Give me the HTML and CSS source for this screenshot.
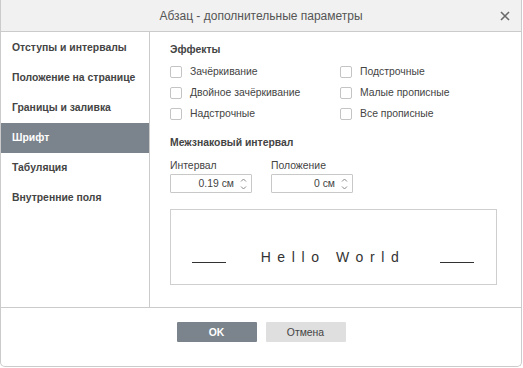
FILE: index.html
```html
<!DOCTYPE html>
<html lang="ru">
<head>
<meta charset="utf-8">
<title>Абзац - дополнительные параметры</title>
<link rel="stylesheet" href="styles.css">
</head>
<body>
<div class="dialog">
  <div class="header">
    <span></span>
    <span class="title">Абзац - дополнительные параметры</span>
    <span class="close"><svg width="10" height="10" viewBox="0 0 10 10"><path d="M1 1L9 9M9 1L1 9" stroke="#6a6a6a" stroke-width="1.6" fill="none"/></svg></span>
  </div>
  <div class="body">
    <ul class="side">
      <li>Отступы и интервалы</li>
      <li>Положение на странице</li>
      <li>Границы и заливка</li>
      <li class="active">Шрифт</li>
      <li>Табуляция</li>
      <li>Внутренние поля</li>
    </ul>
    <div class="content">
      <div class="heading h1">Эффекты</div>
      <div class="checks">
        <label class="check"><span class="box"></span>Зачёркивание</label>
        <label class="check"><span class="box"></span>Подстрочные</label>
        <label class="check"><span class="box"></span>Двойное зачёркивание</label>
        <label class="check"><span class="box"></span>Малые прописные</label>
        <label class="check"><span class="box"></span>Надстрочные</label>
        <label class="check"><span class="box"></span>Все прописные</label>
      </div>
      <div class="heading h2">Межзнаковый интервал</div>
      <div class="fields">
        <div class="field">
          <div class="flabel">Интервал</div>
          <div class="spin"><span class="val">0.19 см</span><svg class="arrows" width="7" height="14" viewBox="0 0 7 14"><path d="M1 4.5L3.5 2L6 4.5M1 9.5L3.5 12L6 9.5" stroke="#8a8a8a" stroke-width="1" fill="none"/></svg></div>
        </div>
        <div class="field">
          <div class="flabel">Положение</div>
          <div class="spin"><span class="val">0 см</span><svg class="arrows" width="7" height="14" viewBox="0 0 7 14"><path d="M1 4.5L3.5 2L6 4.5M1 9.5L3.5 12L6 9.5" stroke="#8a8a8a" stroke-width="1" fill="none"/></svg></div>
        </div>
      </div>
      <div class="preview">
        <span class="rule"></span>
        <span class="sample">Hello World</span>
        <span class="rule"></span>
      </div>
    </div>
  </div>
  <div class="footer">
    <button class="btn ok">OK</button>
    <button class="btn cancel">Отмена</button>
  </div>
</div>
</body>
</html>
```

FILE: styles.css
```css
html, body {
  margin: 0;
  padding: 0;
  background: #fff;
}
body {
  font-family: "Liberation Sans", Arial, sans-serif;
  font-size: 10.4px;
  color: #444;
}
.dialog {
  box-sizing: border-box;
  width: 522px;
  height: 367px;
  border: 1px solid #cbcbcb;
  border-top: 0;
  border-radius: 0 0 5px 5px;
  display: flex;
  flex-direction: column;
  overflow: hidden;
}
.header {
  height: 31px;
  flex: none;
  background: #f1f1f1;
  border-bottom: 1px solid #cbcbcb;
  display: grid;
  grid-template-columns: 1fr auto 1fr;
  align-items: center;
}
.title {
  font-size: 12px;
  color: #555;
}
.close {
  justify-self: end;
  margin-right: 11px;
  display: flex;
}
.body {
  flex: 1;
  display: flex;
  min-height: 0;
}
.side {
  list-style: none;
  margin: 0;
  padding: 1px 0 0;
  width: 148px;
  flex: none;
  border-right: 1px solid #cbcbcb;
}
.side li {
  height: 30px;
  line-height: 30px;
  padding-left: 11px;
  font-weight: bold;
  color: #444;
}
.side li.active {
  background: #7b848c;
  color: #fff;
}
.content {
  flex: 1;
  padding: 11px 0 0 20px;
}
.heading {
  font-weight: bold;
  line-height: 14px;
  color: #444;
}
.checks {
  margin-top: 4px;
  display: grid;
  grid-template-columns: 170px 170px;
  grid-auto-rows: 21px;
}
.check {
  display: flex;
  align-items: center;
  color: #444;
}
.box {
  box-sizing: border-box;
  width: 12px;
  height: 12px;
  border: 1px solid #c4c4c4;
  border-radius: 2px;
  margin-right: 8px;
  background: #fff;
}
.h2 {
  margin-top: 12px;
}
.fields {
  display: flex;
  gap: 19px;
  margin-top: 9px;
}
.flabel {
  line-height: 14px;
  margin-bottom: 1px;
}
.spin {
  box-sizing: border-box;
  width: 82px;
  height: 19px;
  border: 1px solid #c8c8c8;
  border-radius: 1px;
  display: flex;
  align-items: center;
  justify-content: flex-end;
  padding-right: 4px;
}
.val {
  margin-right: 6px;
  color: #444;
}
.arrows {
  display: block;
}
.preview {
  box-sizing: border-box;
  margin-top: 16px;
  width: 327px;
  height: 76px;
  border: 1px solid #cfcfcf;
  display: flex;
  justify-content: space-between;
  align-items: flex-end;
  padding: 0 22px 21px 21px;
}
.rule {
  width: 34px;
  height: 1px;
  background: #333;
}
.sample {
  font-size: 14px;
  line-height: 16px;
  letter-spacing: 6.6px;
  color: #333;
  margin-bottom: -2px;
}
.footer {
  flex: none;
  height: 44px;
  border-top: 1px solid #cbcbcb;
  display: flex;
  justify-content: center;
  align-items: flex-start;
  gap: 9px;
  padding-top: 14px;
  box-sizing: content-box;
}
.btn {
  width: 80px;
  height: 20px;
  border: 0;
  border-radius: 1px;
  font-family: "Liberation Sans", Arial, sans-serif;
  font-size: 10.4px;
  padding: 0;
}
.ok {
  background: #7b848c;
  color: #fff;
  font-weight: bold;
}
.cancel {
  background: #dfdfdf;
  color: #444;
}
```
